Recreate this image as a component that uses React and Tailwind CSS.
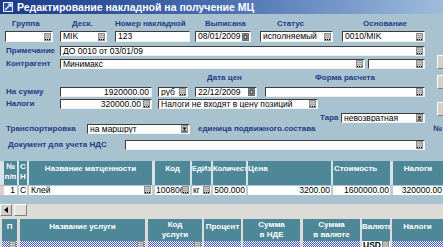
import React from "react";

function Dots() {
  return (
    <svg width="7" height="8" viewBox="0 0 7 8" className="shrink-0 mr-[1px]">
      <rect x="0" y="0" width="7" height="8" fill="#c6c6c6" />
      <rect x="0.5" y="0.5" width="6" height="7" fill="none" stroke="#8c8c8c" strokeWidth="1" />
      <rect x="1" y="2" width="5" height="1" fill="#a8a8a8" />
      <rect x="1" y="4" width="5" height="1" fill="#a8a8a8" />
      <rect x="1" y="6" width="1" height="1" fill="#000" />
      <rect x="3" y="6" width="1" height="1" fill="#000" />
      <rect x="5" y="6" width="1" height="1" fill="#000" />
    </svg>
  );
}

function Cal() {
  return (
    <svg width="7" height="8" viewBox="0 0 7 8" className="shrink-0 mr-[1px]">
      <rect x="0" y="0" width="7" height="8" fill="#c6c6c6" />
      <rect x="0.5" y="0.5" width="6" height="7" fill="none" stroke="#6c6c6c" strokeWidth="1" />
      <rect x="2" y="2" width="3" height="4" fill="none" stroke="#222" strokeWidth="1" />
    </svg>
  );
}

function Drop() {
  return (
    <svg width="7" height="8" viewBox="0 0 7 8" className="shrink-0 mr-[1px]">
      <rect x="0" y="0" width="7" height="8" fill="#c6c6c6" />
      <rect x="0.5" y="0.5" width="6" height="7" fill="none" stroke="#8c8c8c" strokeWidth="1" />
      <path d="M1.5 2.5 L5.5 2.5 L3.5 5 Z" fill="#000" />
      <rect x="1.5" y="5.5" width="4" height="1" fill="#000" />
    </svg>
  );
}

function Field({ className = "", text = "", btn = null, right = false }) {
  return (
    <div
      className={
        "flex items-center h-full bg-white border-t border-l border-[#3c3c3c] border-b border-r border-b-[#f0f0f0] border-r-[#f0f0f0] overflow-hidden shrink-0 " +
        className
      }
    >
      <span
        className={
          "flex-1 whitespace-nowrap overflow-hidden px-[2px] text-[8.5px] leading-none " +
          (right ? "text-right" : "text-left")
        }
      >
        {text}
      </span>
      {btn}
    </div>
  );
}

function Lbl({ className = "", children }) {
  return (
    <span className={"shrink-0 whitespace-nowrap text-[8px] font-bold leading-none text-[#1f3c88] " + className}>
      {children}
    </span>
  );
}

function Raised({ className = "", children }) {
  return (
    <div
      className={
        "bg-[#d4d0c8] border-t border-l border-white border-b border-r border-b-[#808080] border-r-[#808080] shrink-0 " +
        className
      }
    >
      {children}
    </div>
  );
}

export default function App() {
  return (
    <div className="w-[443px] h-[247px] overflow-hidden bg-[#a8c3cf] font-['Liberation_Sans',Arial,sans-serif] text-black">
      {/* Title bar */}
      <div className="h-[14px] flex items-center bg-linear-to-r from-[#1b3987] via-[#4a6fb0] to-[#9fbcdc] pl-[3px]">
        <svg width="10" height="10" viewBox="0 0 10 10" className="shrink-0">
          <rect x="0" y="0" width="10" height="10" fill="#e8eef8" />
          <rect x="1" y="1" width="8" height="8" fill="#2a4fa8" />
          <path d="M2 8 L8 2 M5 2 L8 2 L8 5" stroke="#fff" strokeWidth="1.2" fill="none" />
        </svg>
        <span className="ml-[4px] text-white font-bold text-[10.5px] leading-none whitespace-nowrap">
          Редактирование накладной на получение МЦ
        </span>
      </div>

      {/* Upper form */}
      <div className="flex">
        <div className="w-[437px] shrink-0">
          {/* labels row */}
          <div className="flex items-center h-[9px] mt-[5px]">
            <Lbl className="ml-[12px] w-[60px]">Группа</Lbl>
            <Lbl className="w-[43px]">Деск.</Lbl>
            <Lbl className="w-[90px]">Номер накладной</Lbl>
            <Lbl className="w-[72px]">Выписана</Lbl>
            <Lbl className="w-[86px]">Статус</Lbl>
            <Lbl>Основание</Lbl>
          </div>
          {/* row 1 */}
          <div className="flex h-[11px] mt-[3px]">
            <Field className="ml-[5px] w-[48px]" btn={<Dots />} />
            <Field className="ml-[7px] w-[47px]" text="MIK" btn={<Dots />} />
            <Field className="ml-[8px] w-[75px]" text="123" />
            <Field className="ml-[5px] w-[56px]" text="08/01/2009" btn={<Cal />} />
            <Field className="ml-[9px] w-[73px]" text="исполняемый" btn={<Dots />} />
            <Field className="ml-[9px] w-[83px]" text="0010/MIK" btn={<Dots />} />
          </div>
          {/* Примечание */}
          <div className="flex items-center h-[10px] mt-[4px]">
            <Lbl className="ml-[6px] w-[54px]">Примечание</Lbl>
            <Field className="w-[365px]" text="ДО 0010 от 03/01/09" btn={<Dots />} />
          </div>
          {/* Контрагент */}
          <div className="flex items-center h-[10px] mt-[3px]">
            <Lbl className="ml-[6px] w-[54px]">Контрагент</Lbl>
            <Field className="w-[305px]" text="Минимакс" btn={<Dots />} />
            <Field className="ml-[3px] w-[57px]" btn={<Dots />} />
          </div>
          {/* labels 2 */}
          <div className="flex items-center h-[9px] mt-[4px]">
            <Lbl className="ml-[207px] w-[108px]">Дата цен</Lbl>
            <Lbl>Форма расчета</Lbl>
          </div>
          {/* На сумму */}
          <div className="flex items-center h-[10px] mt-[5px]">
            <Lbl className="ml-[6px] w-[54px]">На сумму</Lbl>
            <Field className="w-[92px]" text="1920000.00" right />
            <Field className="ml-[6px] w-[30px]" text="руб" btn={<Dots />} />
            <Field className="ml-[7px] w-[62px]" text="22/12/2009" btn={<Cal />} />
            <Field className="ml-[8px] w-[160px]" btn={<Dots />} />
          </div>
          {/* Налоги */}
          <div className="flex items-center h-[10px] mt-[2px]">
            <Lbl className="ml-[6px] w-[54px]">Налоги</Lbl>
            <Field className="w-[92px]" text="320000.00" right btn={<Dots />} />
            <Field className="ml-[6px] w-[160px]" text="Налоги не входят в цену позиций" btn={<Dots />} />
          </div>
          {/* Тара */}
          <div className="flex items-center h-[10px] mt-[4px]">
            <Lbl className="ml-[320px] w-[21px]">Тара</Lbl>
            <Field className="w-[84px]" text="невозвратная" btn={<Drop />} />
          </div>
          {/* Транспортировка */}
          <div className="flex items-center h-[10px] mt-[1px]">
            <Lbl className="ml-[6px] w-[81px]">Транспортировка</Lbl>
            <Field className="w-[103px]" text="на маршрут" btn={<Drop />} />
            <Lbl className="ml-[8px] w-[235px]">единица подвижного.состава</Lbl>
            <Lbl>№</Lbl>
          </div>
          {/* Документ */}
          <div className="flex items-center h-[10px] mt-[6px]">
            <Lbl className="ml-[8px] w-[117px]">Документ для учета НДС</Lbl>
            <Field className="w-[300px]" btn={<Dots />} />
          </div>
        </div>
        <div className="flex flex-col">
          <Raised className="w-[8px] h-[14px] mt-[41px]" />
          <Raised className="w-[8px] h-[14px] mt-[6px]" />
          <Raised className="w-[8px] h-[14px] mt-[13px]" />
        </div>
      </div>

      {/* Grid 1 */}
      <div className="mt-[11px]">
        <div className="flex h-[24px] bg-[#d5e2e7]">
          <div className="w-[4px] shrink-0" />
          <div className="w-[13px] shrink-0 bg-[#4e8797] text-white font-bold text-[8px] leading-[10px] text-center pt-[1px]">№<br />п/п</div>
          <div className="ml-[2px] w-[8px] shrink-0 bg-[#4e8797] text-white font-bold text-[8px] leading-[10px] text-center pt-[1px]">С<br />Н</div>
          <div className="ml-[2px] w-[123px] shrink-0 bg-[#4e8797] text-white font-bold text-[8px] leading-[10px] text-center pt-[3px] whitespace-nowrap overflow-hidden">Название матценности</div>
          <div className="ml-[3px] w-[35px] shrink-0 bg-[#4e8797] text-white font-bold text-[8px] leading-[10px] text-center pt-[3px] whitespace-nowrap overflow-hidden">Код</div>
          <div className="ml-[2px] w-[19px] shrink-0 bg-[#4e8797] text-white font-bold text-[7.5px] leading-[10px] text-left pt-[3px] whitespace-nowrap overflow-hidden">ЕдИзм</div>
          <div className="ml-[2px] w-[33px] shrink-0 bg-[#4e8797] text-white font-bold text-[7.5px] leading-[10px] text-left pt-[3px] whitespace-nowrap overflow-hidden">Количество</div>
          <div className="ml-[2px] w-[83px] shrink-0 bg-[#4e8797] text-white font-bold text-[8px] leading-[10px] text-left pt-[3px] whitespace-nowrap overflow-hidden">Цена</div>
          <div className="ml-[2px] w-[57px] shrink-0 bg-[#4e8797] text-white font-bold text-[8px] leading-[10px] text-left pt-[3px] pl-[1px] whitespace-nowrap overflow-hidden">Стоимость</div>
          <div className="ml-[3px] w-[50px] shrink-0 bg-[#4e8797] text-white font-bold text-[8px] leading-[10px] text-center pt-[3px] whitespace-nowrap overflow-hidden">Налоги</div>
        </div>
        <div className="flex h-[9px] mt-[1px] bg-[#c4ccd0] text-[8.5px] leading-[9px]">
          <div className="w-[4px] shrink-0 bg-[#e9c9cf]" />
          <div className="w-[13px] shrink-0 bg-white text-right pr-[2px]">1</div>
          <div className="ml-[2px] w-[8px] shrink-0 bg-white text-center">С</div>
          <div className="ml-[2px] w-[123px] shrink-0 bg-white flex items-start">
            <span className="flex-1 pl-[2px] whitespace-nowrap overflow-hidden">Клей</span>
            <Dots />
          </div>
          <div className="ml-[3px] w-[35px] shrink-0 bg-white flex items-start">
            <span className="flex-1 pl-[1px] whitespace-nowrap overflow-hidden">100806</span>
            <Dots />
          </div>
          <div className="ml-[2px] w-[19px] shrink-0 bg-white flex items-start">
            <span className="flex-1 pl-[1px] whitespace-nowrap overflow-hidden">кг</span>
            <Dots />
          </div>
          <div className="ml-[2px] w-[33px] shrink-0 bg-white text-right pr-[1px] whitespace-nowrap overflow-hidden">500.000</div>
          <div className="ml-[2px] w-[83px] shrink-0 bg-white text-right pr-[1px] whitespace-nowrap overflow-hidden">3200.00</div>
          <div className="ml-[2px] w-[57px] shrink-0 bg-white text-right pr-[1px] whitespace-nowrap overflow-hidden">1600000.00</div>
          <div className="ml-[3px] w-[50px] shrink-0 bg-white text-right pr-[1px] whitespace-nowrap overflow-hidden">320000.00</div>
        </div>
        <div className="h-[9px]" />
        {/* scrollbar */}
        <div className="h-[15px] bg-[#dddbd5]">
          <div className="flex h-[12px]">
            <Raised className="w-[12px] h-[12px] flex items-center justify-center">
              <svg width="4" height="6" viewBox="0 0 4 6"><path d="M4 0 L0 3 L4 6 Z" fill="#000" /></svg>
            </Raised>
            <Raised className="ml-[2px] w-[13px] h-[12px] bg-[#e4e1da]" />
          </div>
        </div>
      </div>

      {/* Grid 2 */}
      <div className="flex h-[22px] bg-[#dddbd5]">
        <div className="ml-[2px] w-[15px] shrink-0 bg-[#4e8797] text-white font-bold text-[8px] leading-[10px] text-center pt-[3px]">П</div>
        <div className="ml-[3px] w-[125px] shrink-0 bg-[#4e8797] text-white font-bold text-[8px] leading-[10px] text-center pt-[3px] whitespace-nowrap overflow-hidden">Название услуги</div>
        <div className="ml-[3px] w-[54px] shrink-0 bg-[#4e8797] text-white font-bold text-[8px] leading-[10px] text-center pt-[1px] whitespace-nowrap overflow-hidden">Код<br />услуги</div>
        <div className="ml-[2px] w-[37px] shrink-0 bg-[#4e8797] text-white font-bold text-[8px] leading-[10px] text-center pt-[3px] whitespace-nowrap overflow-hidden">Процент</div>
        <div className="ml-[2px] w-[57px] shrink-0 bg-[#4e8797] text-white font-bold text-[8px] leading-[10px] text-center pt-[1px] whitespace-nowrap overflow-hidden">Сумма<br />в НДЕ</div>
        <div className="ml-[3px] w-[57px] shrink-0 bg-[#4e8797] text-white font-bold text-[8px] leading-[10px] text-center pt-[1px] whitespace-nowrap overflow-hidden">Сумма<br />в валюте</div>
        <div className="ml-[2px] w-[28px] shrink-0 bg-[#4e8797] text-white font-bold text-[8px] leading-[10px] text-center pt-[3px] whitespace-nowrap overflow-hidden">Валюта</div>
        <div className="ml-[2px] w-[51px] shrink-0 bg-[#4e8797] text-white font-bold text-[8px] leading-[10px] text-center pt-[3px] whitespace-nowrap overflow-hidden">Налоги</div>
      </div>
      <div className="flex h-[7px] bg-[#dddbd5] text-[8.5px] leading-[8px]">
        <div className="ml-[2px] w-[15px] shrink-0 flex justify-end items-start bg-[repeating-conic-gradient(#4a5ec4_0_25%,#eef0ff_0_50%)] bg-[length:2px_2px]">
          <Dots />
        </div>
        <div className="ml-[3px] w-[125px] shrink-0 flex justify-end items-start bg-[repeating-conic-gradient(#4a5ec4_0_25%,#eef0ff_0_50%)] bg-[length:2px_2px]">
          <Dots />
        </div>
        <div className="ml-[3px] w-[54px] shrink-0 flex justify-end items-start bg-[repeating-conic-gradient(#4a5ec4_0_25%,#eef0ff_0_50%)] bg-[length:2px_2px]">
          <Dots />
        </div>
        <div className="ml-[2px] w-[37px] shrink-0 bg-[repeating-conic-gradient(#4a5ec4_0_25%,#eef0ff_0_50%)] bg-[length:2px_2px]" />
        <div className="ml-[2px] w-[57px] shrink-0 bg-[repeating-conic-gradient(#4a5ec4_0_25%,#eef0ff_0_50%)] bg-[length:2px_2px]" />
        <div className="ml-[3px] w-[57px] shrink-0 bg-[repeating-conic-gradient(#4a5ec4_0_25%,#eef0ff_0_50%)] bg-[length:2px_2px]" />
        <div className="ml-[2px] w-[28px] shrink-0 flex items-start bg-white">
          <span className="flex-1 pl-[1px] font-bold">USD</span>
          <Dots />
        </div>
        <div className="ml-[2px] w-[51px] shrink-0 bg-[repeating-conic-gradient(#4a5ec4_0_25%,#eef0ff_0_50%)] bg-[length:2px_2px]" />
      </div>
    </div>
  );
}
